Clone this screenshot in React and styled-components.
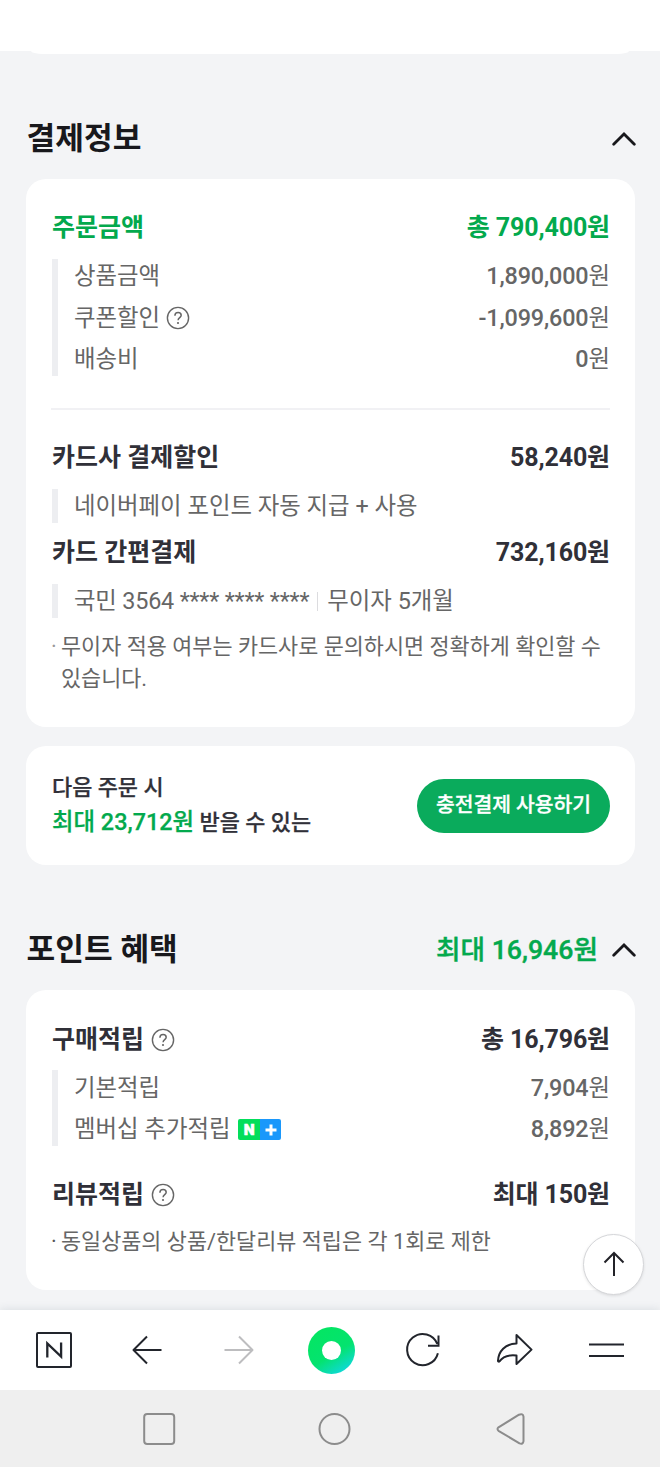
import React from 'react'
import styled, { createGlobalStyle } from 'styled-components'

const GlobalStyle = createGlobalStyle`
  * {
    box-sizing: border-box;
  }

  body {
    margin: 0;
    background: #f3f4f6;
    font-family: Roboto, "Noto Sans CJK KR", sans-serif;
    color: #303038;
  }
`
const Page = styled.div`
  position: relative;
  display: flex;
  flex-direction: column;
  width: 660px;
  height: 1467px;
  overflow: hidden;
  background: #f3f4f6;
`
const TopStrip = styled.div`
  height: 51px;
  background: #fff;
`
const PreviousCard = styled.div`
  height: 3px;
  margin: 0 31px;
  background: #fff;
  border-radius: 0 0 12px 12px / 0 0 3px 3px;
`
const Content = styled.main`
  flex: 1;
  padding: 0 24px 0 26px;
`
const SectionHeader = styled.header`
  display: flex;
  align-items: center;
  justify-content: space-between;
  height: 125px;
  padding-top: 45px;
`
const SectionTitle = styled.h2`
  margin: 0;
  padding-left: 0.6px;
  font-size: 31.2px;
  line-height: 40px;
  font-weight: 700;
  color: #18181c;
`
const HeaderSide = styled.div`
  display: flex;
  align-items: center;
  gap: 14px;
`
const HeaderAmount = styled.strong`
  font-size: 26.7px;
  line-height: 40px;
  font-weight: 500;
  -webkit-text-stroke: 0.4px currentColor;
  color: #03a94d;
`
const Card = styled.section`
  height: ${props => props.$height}px;
  margin-right: 1px;
  padding: 29px 25px 0 26px;
  background: #fff;
  border-radius: 20px;
`
const TotalRow = styled.div`
  display: flex;
  align-items: center;
  justify-content: space-between;
  height: 40px;
  margin-top: ${props => props.$gap || 0}px;
  font-size: 25px;
  line-height: 40px;
  font-weight: 700;
  color: ${props => (props.$green ? '#03a94d' : '#303038')};
`
const TotalValue = styled.span`
  letter-spacing: -0.13px;
`
const Label = styled.span`
  display: flex;
  align-items: center;
  gap: ${props => props.$gap || 7}px;
`
const DetailList = styled.div`
  height: ${props => props.$height}px;
  margin-top: ${props => props.$top || 11}px;
  padding-top: ${props => (props.$top ? 2 : 1)}px;
  border-left: 6px solid #edeef1;
  padding-left: 16px;
`
const DetailRow = styled.div`
  display: flex;
  align-items: center;
  justify-content: space-between;
  height: ${props => props.$height}px;
  font-size: 23.4px;
  line-height: 33px;
  font-weight: 400;
  color: #666;
`
const Digits = styled.b`
  font-weight: 500;
  letter-spacing: -0.15px;
`
const Masked = styled.span`
  letter-spacing: -0.2px;
`
const Rule = styled.hr`
  height: 2px;
  margin: 32px 0 28px -1px;
  border: 0;
  background: #f1f1f4;
`
const Separator = styled.i`
  display: inline-block;
  width: 1px;
  height: 19px;
  margin: 0 9px 0 8px;
  background: #dcdcdf;
`
const Note = styled.p`
  display: flex;
  margin: ${props => props.$top}px 0 0;
  font-size: 21.84px;
  line-height: 32px;
  color: #666;
  white-space: nowrap;
`
const Bullet = styled.span`
  flex: 0 0 10px;
  margin-left: -1px;
  color: ${props => (props.$light ? '#999' : '#555')};
`
const PromoCard = styled(Card)`
  display: flex;
  align-items: flex-start;
  justify-content: space-between;
  margin-top: 19px;
  padding-top: 25px;
`
const PromoText = styled.p`
  margin: 0;
  font-size: 21.9px;
  line-height: 34px;
  font-weight: 500;
  -webkit-text-stroke: 0.25px currentColor;

  em {
    font-style: normal;
    font-size: 23.4px;
    color: #03a94d;
  }
`
const ChargeButton = styled.button`
  width: 193px;
  height: 54px;
  margin-top: 8px;
  padding: 0 0 6px;
  border: 0;
  border-radius: 27px;
  background: #0aab5c;
  font-family: inherit;
  font-size: 20.4px;
  font-weight: 500;
  -webkit-text-stroke: 0.3px currentColor;
  color: #fff;
`
const PlusBadge = styled.span`
  display: flex;
  width: 43px;
  height: 21px;
  margin-left: 1px;
  border-radius: 2px;
  overflow: hidden;
  font-size: 15.5px;
  line-height: 22px;
  font-weight: 900;
  -webkit-text-stroke: 0.6px currentColor;
  color: #fff;
`
const BadgeHalf = styled.span`
  display: flex;
  align-items: center;
  justify-content: center;
  flex: 1;
  background: ${props => props.$color};
`
const TopButton = styled.button`
  position: absolute;
  left: 583px;
  top: 1234px;
  display: flex;
  align-items: center;
  justify-content: center;
  width: 61px;
  height: 61px;
  padding: 0 0 2px;
  border: 1px solid #d5d6d9;
  border-radius: 50%;
  background: #fff;
  box-shadow: 0 1px 3px rgba(0, 0, 0, 0.1);
`
const BrowserBar = styled.nav`
  display: flex;
  align-items: center;
  justify-content: space-between;
  height: 80px;
  padding: 0 33px 0 34px;
  background: #fff;
  box-shadow: 0 -1px 8px rgba(60, 80, 100, 0.12);
`
const SystemBar = styled.div`
  display: flex;
  align-items: center;
  justify-content: space-between;
  height: 77px;
  padding: 0 132px 0 141px;
  background: #efefef;
`

const ChevronUp = () => (
  <svg width="24" height="16" viewBox="0 0 24 16" fill="none" stroke="#18181c" strokeWidth="2.8" strokeLinecap="round">
    <path d="M1.700 13.200 12 2.900 22.300 13.200" />
  </svg>
)

const Help = () => (
  <svg width="24" height="24" viewBox="0 0 24 24" fill="none" stroke="#666" strokeWidth="1.4">
    <circle cx="12" cy="12" r="10.6" />
    <path d="M8.900 9.700c0-2 1.400-3.200 3.200-3.200s3.100 1.200 3.100 2.800c0 2.300-3.100 2.400-3.100 4.900" strokeWidth="1.5" />
    <circle cx="12" cy="17" r="1.100" fill="#666" stroke="none" />
  </svg>
)

const Total = ({ label, value, help, ...rest }) => (
  <TotalRow {...rest}>
    <Label>{label}{help && <Help />}</Label>
    <TotalValue>{value}</TotalValue>
  </TotalRow>
)

const Won = ({ amount }) => <span><Digits>{amount}</Digits>원</span>

const PaymentCard = () => (
  <Card $height={548}>
    <Total label="주문금액" value="총 790,400원" $green />
    <DetailList $height={117}>
      <DetailRow $height={33}><span>상품금액</span><Won amount="1,890,000" /></DetailRow>
      <DetailRow $height={50}><Label $gap={6}>쿠폰할인<Help /></Label><Won amount="-1,099,600" /></DetailRow>
      <DetailRow $height={32}><span>배송비</span><Won amount="0" /></DetailRow>
    </DetailList>
    <Rule />
    <Total label="카드사 결제할인" value="58,240원" />
    <DetailList $height={34}>
      <DetailRow $height={32}><span>네이버페이 포인트 자동 지급 + 사용</span></DetailRow>
    </DetailList>
    <Total label="카드 간편결제" value="732,160원" $gap={10} />
    <DetailList $height={34}>
      <DetailRow $height={32}>
        <Label $gap={0.01}>
          <Masked>국민 3564 **** **** ****</Masked><Separator />무이자 5개월
        </Label>
      </DetailRow>
    </DetailList>
    <Note $top={13}>
      <Bullet $light>·</Bullet>
      <span>무이자 적용 여부는 카드사로 문의하시면 정확하게 확인할 수<br />있습니다.</span>
    </Note>
  </Card>
)

const PointCard = () => (
  <Card $height={300}>
    <Total label="구매적립" value="총 16,796원" help $gap={1} />
    <DetailList $height={76} $top={10}>
      <DetailRow $height={32}><span>기본적립</span><Won amount="7,904" /></DetailRow>
      <DetailRow $height={51}>
        <Label>
          멤버십 추가적립
          <PlusBadge>
            <BadgeHalf $color="#03de5b">N</BadgeHalf>
            <BadgeHalf $color="#1a98fb">
              <svg width="12" height="12" viewBox="0 0 12 12" fill="none" stroke="#fff" strokeWidth="3">
                <path d="M6 0.500v11M0.500 6h11" />
              </svg>
            </BadgeHalf>
          </PlusBadge>
        </Label>
        <Won amount="8,892" />
      </DetailRow>
    </DetailList>
    <Total label="리뷰적립" value="최대 150원" help $gap={29} />
    <Note $top={11}>
      <Bullet>·</Bullet>
      <span>동일상품의 상품/한달리뷰 적립은 각 1회로 제한</span>
    </Note>
  </Card>
)

const BrowserIcons = () => (
  <BrowserBar>
    <svg width="40" height="50" viewBox="34 1325 40 50" fill="none" stroke="#22252c" strokeWidth="2">
      <rect x="37" y="1333" width="34" height="34" rx="1" />
      <path d="M47.300 1357.500v-14l13.800 13v-14" strokeWidth="2.300" />
    </svg>
    <svg width="40" height="50" viewBox="127 1325 40 50" fill="none" stroke="#22252c" strokeWidth="2">
      <path d="M162.500 1350h-28M148 1336.500 134.500 1350 148 1363.500" strokeLinejoin="round" />
    </svg>
    <svg width="40" height="50" viewBox="219 1325 40 50" fill="none" stroke="#bdbdbf" strokeWidth="2">
      <path d="M225.500 1350h28M240 1336.500 253.500 1350 240 1363.500" strokeLinejoin="round" />
    </svg>
    <svg width="40" height="50" viewBox="310 1325 40 50" overflow="visible">
      <defs>
        <linearGradient id="dot" x1="0.3" y1="0.1" x2="0.85" y2="1">
          <stop offset="0" stopColor="#04e564" />
          <stop offset="0.5" stopColor="#04e36f" />
          <stop offset="1" stopColor="#10d7ec" />
        </linearGradient>
      </defs>
      <circle cx="331.500" cy="1350.500" r="23.500" fill="url(#dot)" />
      <circle cx="331.500" cy="1350.500" r="9.500" fill="#fff" />
    </svg>
    <svg width="40" height="50" viewBox="402.500 1325 40 50" fill="none" stroke="#22252c" strokeWidth="2">
      <path d="M437.400 1353.200A15.600 15.600 0 1 1 436.800 1344M427.500 1345.800H438V1335.500" />
    </svg>
    <svg width="40" height="50" viewBox="495 1325 40 50" fill="none" stroke="#22252c" strokeWidth="2" strokeLinejoin="round">
      <path d="M516.500 1335 531.500 1349.600 516.500 1364v-8.500c-9-1-14 1.500-17 5.900-.5.500-1.500.2-1.500-.5.500-9.500 7-17 18.500-17.400z" />
    </svg>
    <svg width="40" height="50" viewBox="587 1325 40 50" fill="none" stroke="#22252c" strokeWidth="2">
      <path d="M589 1344.500h35M589 1356h35" />
    </svg>
  </BrowserBar>
)

const SystemIcons = () => (
  <SystemBar>
    <svg width="36" height="36" viewBox="0 0 36 36" fill="none" stroke="#8c8c8c" strokeWidth="2">
      <rect x="3.200" y="3" width="30" height="30" rx="3" />
    </svg>
    <svg width="36" height="36" viewBox="0 0 36 36" fill="none" stroke="#8c8c8c" strokeWidth="2">
      <circle cx="17.500" cy="18" r="15" />
    </svg>
    <svg width="36" height="36" viewBox="0 0 36 36" fill="none" stroke="#8c8c8c" strokeWidth="2" strokeLinejoin="round">
      <path d="M6.500 16.300 27 3.700q4-1.500 4.500 2v24.500q-.5 3.500-4 2.200L6.500 19.800q-2-1.700 0-3.500z" />
    </svg>
  </SystemBar>
)

const App = () => (
  <Page>
    <GlobalStyle />
    <TopStrip />
    <PreviousCard />
    <Content>
      <SectionHeader>
        <SectionTitle>결제정보</SectionTitle>
        <ChevronUp />
      </SectionHeader>
      <PaymentCard />
      <PromoCard $height={119}>
        <PromoText>
          다음 주문 시<br />
          <em>최대 23,712원</em> 받을 수 있는
        </PromoText>
        <ChargeButton>충전결제 사용하기</ChargeButton>
      </PromoCard>
      <SectionHeader>
        <SectionTitle>포인트 혜택</SectionTitle>
        <HeaderSide>
          <HeaderAmount>최대 16,946원</HeaderAmount>
          <ChevronUp />
        </HeaderSide>
      </SectionHeader>
      <PointCard />
    </Content>
    <TopButton aria-label="top">
      <svg width="24" height="28" viewBox="0 0 24 28" fill="none" stroke="#222228" strokeWidth="2">
        <path d="M12 26V3M2.500 12.500 12 3l9.500 9.500" />
      </svg>
    </TopButton>
    <BrowserIcons />
    <SystemIcons />
  </Page>
)

export default App
